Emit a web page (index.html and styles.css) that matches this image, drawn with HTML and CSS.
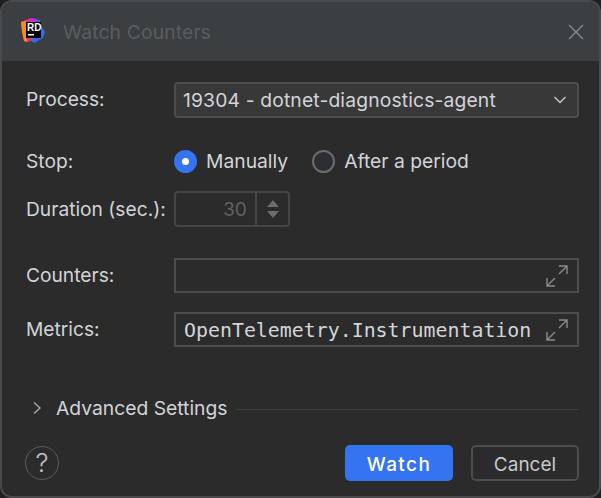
FILE: index.html
```html
<!DOCTYPE html>
<html>
<head>
    <title>Watch Counters</title>
    <link rel="stylesheet" href="styles.css">
</head>
<body>
    <div class="dialog">
        <header class="titlebar">
            <svg class="logo" width="26" height="26" viewBox="0 0 26 26">
                <polygon points="2,4 12,0 17,3 17,20 9,24 5,23" fill="#e8356b"/>
                <polygon points="2,4 7,3 8,24 5,23 3,14" fill="#f58a1f"/>
                <polygon points="17,1 21,2 22,8 26,14 24,20 15,25 11,22 20,18" fill="#2b6ff2"/>
                <polygon points="12,0 18,1 17,5 10,5" fill="#c22be0"/>
                <rect x="7" y="4" width="15" height="16" fill="#000"/>
                <text class="logo-text" x="8" y="12.5">RD</text>
                <rect x="9" y="16" width="6" height="1.5" fill="#fff"/>
            </svg>
            <span class="title">Watch Counters</span>
            <svg class="close" width="16" height="16" viewBox="0 0 16 16">
                <path d="M1 1 L15 15 M15 1 L1 15" stroke="#878a8c" stroke-width="1.4" fill="none"/>
            </svg>
        </header>
        <main class="content">
            <div class="row row-process">
                <label>Process:</label>
                <div class="field combo">
                    <span>19304 - dotnet-diagnostics-agent</span>
                    <svg width="14" height="8" viewBox="0 0 14 8">
                        <path d="M1.5 1 L7 6.5 L12.5 1" stroke="#c4c7ca" stroke-width="1.4" fill="none"/>
                    </svg>
                </div>
            </div>
            <div class="row row-stop">
                <label>Stop:</label>
                <div class="radios">
                    <span class="radio"><i class="dot on"></i>Manually</span>
                    <span class="radio"><i class="dot"></i>After a period</span>
                </div>
            </div>
            <div class="row row-duration">
                <label>Duration (sec.):</label>
                <div class="spinner">
                    <span class="spin-value">30</span>
                    <span class="spin-arrows"><i class="up"></i><i class="down"></i></span>
                </div>
            </div>
            <div class="row row-counters">
                <label>Counters:</label>
                <div class="field expand">
                    <span class="mono"></span>
                    <svg width="22" height="24" viewBox="0 0 22 24">
                        <path d="M13 2 H21 V10 M21 2 L13 10 M1 14 V22 H9 M1 22 L9 14" stroke="#8a8d90" stroke-width="1.4" fill="none"/>
                    </svg>
                </div>
            </div>
            <div class="row row-metrics">
                <label>Metrics:</label>
                <div class="field expand">
                    <span class="mono">OpenTelemetry.Instrumentation</span>
                    <svg width="22" height="24" viewBox="0 0 22 24">
                        <path d="M13 2 H21 V10 M21 2 L13 10 M1 14 V22 H9 M1 22 L9 14" stroke="#8a8d90" stroke-width="1.4" fill="none"/>
                    </svg>
                </div>
            </div>
            <div class="advanced">
                <svg width="10" height="14" viewBox="0 0 10 14">
                    <path d="M2 1.5 L8 7 L2 12.5" stroke="#a4a7aa" stroke-width="1.4" fill="none"/>
                </svg>
                <span>Advanced Settings</span>
                <div class="line"></div>
            </div>
            <footer class="buttons">
                <div class="help">?</div>
                <button class="btn primary">Watch</button>
                <button class="btn">Cancel</button>
            </footer>
        </main>
    </div>
</body>
</html>
```
FILE: styles.css
```css
* {
    box-sizing: border-box;
}
html, body {
    margin: 0;
    height: 100%;
    background: #1f1f1f;
}
body {
    font-family: Inter, 'Noto Sans', sans-serif;
    font-size: 19.3px;
    color: #d2d5d8;
}
.dialog {
    width: 601px;
    height: 498px;
    border: 2px solid #484a4c;
    border-radius: 12px;
    background: #2b2b2b;
    overflow: hidden;
    display: flex;
    flex-direction: column;
}
.titlebar {
    height: 59px;
    background: #3c3f41;
    display: flex;
    align-items: center;
    padding: 0 15px 0 17px;
}
.logo {
    flex: none;
    margin-top: -2px;
}
.logo-text {
    font-family: 'Liberation Sans', sans-serif;
    font-size: 10px;
    font-weight: bold;
    fill: #fff;
}
.title {
    margin-left: 18px;
    color: #5a5d5f;
    flex: 1;
    letter-spacing: 0.15px;
}
.content {
    padding: 21px 20px 0 24px;
    flex: 1;
}
.row {
    display: flex;
    align-items: center;
}
.row label {
    width: 148px;
    flex: none;
    font-size: 19.2px;
}
.row-process label,
.row-counters label,
.row-metrics label {
    margin-bottom: 2px;
}
.row-process {
    height: 36px;
}
.row-stop {
    height: 34px;
    margin-top: 26px;
}
.row-duration {
    height: 36px;
    margin-top: 13px;
}
.row-counters {
    height: 35px;
    margin-top: 31px;
}
.row-metrics {
    height: 35px;
    margin-top: 19px;
}
.field {
    flex: 1;
    height: 100%;
    display: flex;
    align-items: center;
    justify-content: space-between;
    border: 2px solid #4b4d4f;
}
.combo {
    background: #383838;
    border-radius: 4px;
    padding: 0 10px 0 7px;
    letter-spacing: 0.15px;
}
.expand {
    padding: 0 9px 0 8px;
}
.mono {
    font-family: 'DejaVu Sans Mono', monospace;
    font-size: 19.9px;
    padding-top: 1px;
}
.radios {
    display: flex;
    gap: 24px;
}
.radio {
    display: flex;
    align-items: center;
    gap: 9px;
}
.dot {
    width: 23px;
    height: 23px;
    border-radius: 50%;
    border: 2px solid #6a6c6f;
    background: #2d2e33;
    display: flex;
    align-items: center;
    justify-content: center;
}
.dot.on {
    background: #3574f0;
    border-color: #3574f0;
}
.dot.on::after {
    content: "";
    width: 7px;
    height: 7px;
    border-radius: 50%;
    background: #fff;
}
.spinner {
    width: 116px;
    height: 36px;
    border: 2px solid #434547;
    border-radius: 4px;
    display: flex;
}
.spin-value {
    flex: 1;
    text-align: right;
    line-height: 32px;
    padding-right: 8px;
    color: #5f6163;
}
.spin-arrows {
    width: 33px;
    border-left: 2px solid #434547;
    display: flex;
    flex-direction: column;
    align-items: center;
    justify-content: center;
    gap: 4px;
}
.spin-arrows i {
    width: 0;
    height: 0;
    border-left: 6.5px solid transparent;
    border-right: 6.5px solid transparent;
}
.spin-arrows .up {
    border-bottom: 7.5px solid #6a6c6e;
}
.spin-arrows .down {
    border-top: 7.5px solid #6a6c6e;
}
.advanced {
    margin-top: 48px;
    height: 28px;
    display: flex;
    align-items: center;
    padding-left: 6px;
}
.advanced svg {
    margin-bottom: 2px;
}
.advanced span {
    margin: 0 0 2px 14px;
}
.line {
    flex: 1;
    height: 1px;
    margin-left: 9px;
    background: #3e3f41;
}
.buttons {
    margin-top: 22px;
    display: flex;
    align-items: center;
}
.help {
    width: 34px;
    height: 34px;
    margin-left: -1px;
    border: 1px solid #5a5c5e;
    border-radius: 50%;
    text-align: center;
    line-height: 32px;
    font-size: 26px;
    font-weight: 300;
    color: #c0c3c5;
}
.btn {
    height: 36px;
    width: 108px;
    margin-left: 18px;
    padding: 2px 0 0;
    border: 2px solid #4b4d4f;
    border-radius: 5px;
    background: #2b2b2b;
    color: #c6c9cb;
    font-family: Inter, 'Noto Sans', sans-serif;
    font-size: 19px;
}
.primary {
    margin-left: auto;
    border: none;
    background: #3574f0;
    color: #fff;
    font-weight: 500;
    letter-spacing: 1.4px;
}
```
